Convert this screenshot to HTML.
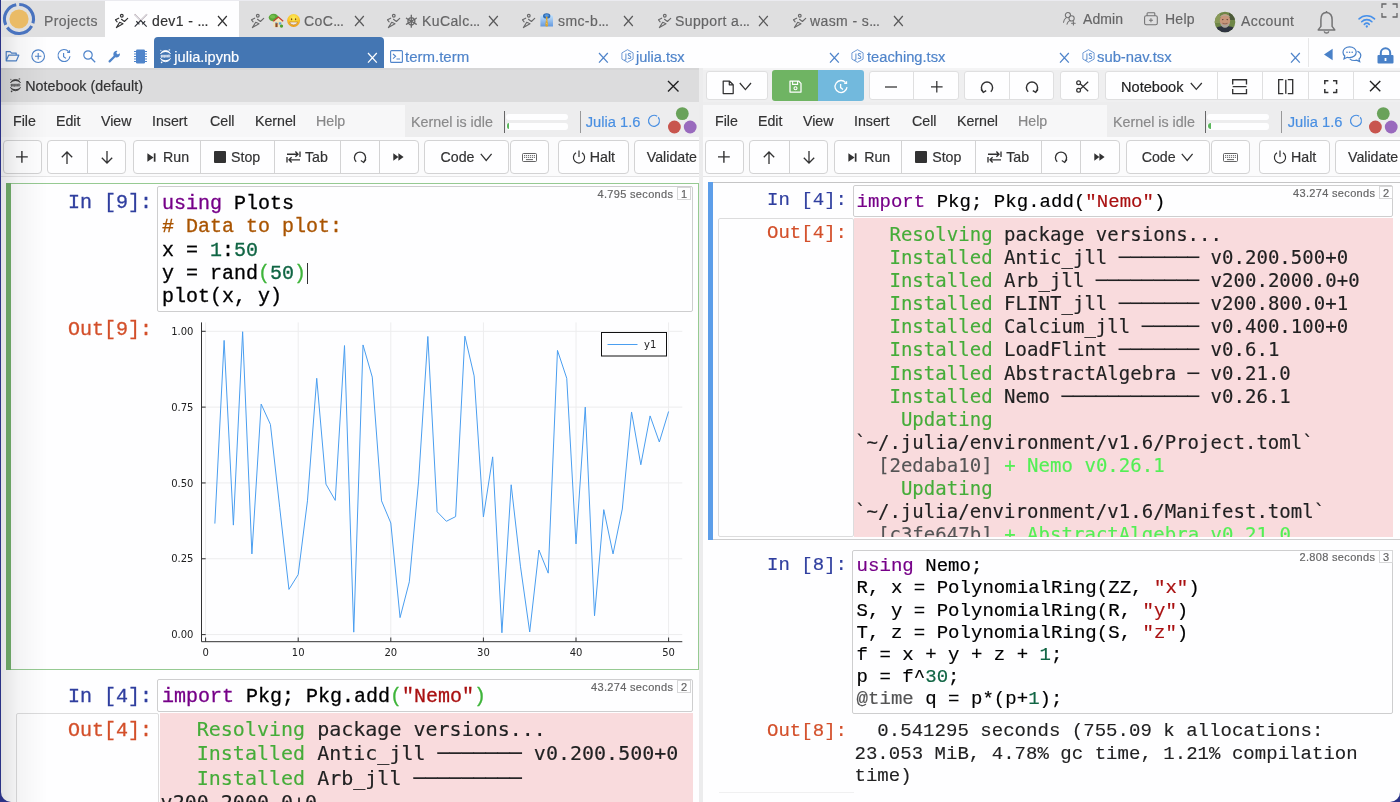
<!DOCTYPE html><html><head><meta charset="utf-8"><title>dev1 - CoCalc</title><style>
*{box-sizing:border-box}
html,body{margin:0;padding:0}html{background:#fff}
body{width:1400px;height:802px;overflow:hidden;background:#2b3286;font-family:"Liberation Sans",sans-serif;color:#333;position:relative}
#win{position:absolute;left:1px;top:0;width:1399px;height:802px;background:#fff;border-radius:0 0 10px 10px;overflow:hidden;will-change:transform;opacity:.9999}
#win>*{position:absolute}
.a{position:absolute}
.t{position:absolute;white-space:pre;line-height:20px;height:20px;-webkit-text-stroke:.18px currentColor}
.btn{position:absolute;background:#fff;border:1px solid #d9d9d9;border-radius:4px}
.dv{position:absolute;width:1px;background:#d9d9d9}
.code{position:absolute;white-space:pre;font-family:"Liberation Mono",monospace;color:#000;-webkit-text-stroke:.3px currentColor}
.out{position:absolute;white-space:pre;font-family:"DejaVu Sans Mono",monospace;color:#222;-webkit-text-stroke:.15px currentColor}
.ibox{position:absolute;border:1px solid #cfcfcf;background:#f7f7f7;border-radius:2px}
.kw{color:#770088}.cm{color:#aa5500}.nu{color:#116644}.st{color:#aa1111}.mb{color:#3fb53a}.me{color:#555}
.g{color:#46ad39}.lg{color:#55f055}.gr{color:#555}
svg{position:absolute;overflow:visible}
</style></head><body><div id="win">
<div class="a" style="left:0px;top:0px;width:1399px;height:37px;background:#e0e0e0;"></div>
<div class="a" style="left:0px;top:0px;width:1399px;height:1px;background:#ececf0;"></div>
<div class="a" style="left:104px;top:1px;width:134px;height:36px;background:#fff;"></div>
<svg style="left:-1px;top:0px;" width="38" height="38" viewBox="0 0 38 38"><circle cx="19" cy="19" r="9.6" fill="#ebbc66"/><path d="M19.25 4.50A14.5 14.5 0 0 1 32.87 23.24 M31.68 26.03A14.5 14.5 0 0 1 7.27 27.52 M5.75 24.90A14.5 14.5 0 0 1 16.23 4.77" stroke="#4a74bf" stroke-width="3.1" fill="none"/></svg>
<span class="t" style="left:43px;top:10.7px;font-size:14px;color:#6a6a6a;letter-spacing:0.42px;">Projects</span>
<svg style="left:112px;top:13px;" width="16" height="16" viewBox="0 0 16 16"><circle cx="8.8" cy="2.7" r="1.35" fill="none" stroke="#333" stroke-width="1.15"/><path d="M5.7 5.2L2.5 6.8L4.1 8.8M8.5 6.3L11.4 8.5L14.7 5.3M3.4 14.6L6.7 9.3L10 10.8Z" fill="none" stroke="#333" stroke-width="1.12" stroke-linejoin="round" stroke-linecap="round"/></svg>
<svg style="left:133px;top:13px;" width="14" height="15" viewBox="0 0 14 15"><path d="M.5 1.3L6.7 7.5M13 1.3L6.7 7.5" stroke="#b39da1" stroke-width="1.5" fill="none"/><path d="M.5 1.3L6.7 7.5M13 1.3L6.7 7.5" stroke="#e6f3fb" stroke-width=".9" fill="none"/><path d="M6.7 7.5L12.7 13.6M6.7 7.5L.7 13.6" stroke="#33363c" stroke-width="1.1" fill="none"/><path d="M2.3 8.2L5.4 11.4M11.1 8.2L8.3 11.4" stroke="#33363c" stroke-width="1.25" fill="none"/></svg>
<span class="t" style="left:151px;top:10.7px;font-size:14px;color:#333;letter-spacing:0.4px;">dev1 - <span style="letter-spacing:-0.5px">...</span></span>
<svg style="left:216.9px;top:16.3px;" width="8.8" height="10" viewBox="0 0 8.8 10"><path d="M0 0L8.8 10M8.8 0L0 10" stroke="#333" stroke-width="1.2" fill="none"/></svg>
<svg style="left:248px;top:13px;" width="16" height="16" viewBox="0 0 16 16"><circle cx="8.8" cy="2.7" r="1.35" fill="none" stroke="#6a6a6a" stroke-width="1.15"/><path d="M5.7 5.2L2.5 6.8L4.1 8.8M8.5 6.3L11.4 8.5L14.7 5.3M3.4 14.6L6.7 9.3L10 10.8Z" fill="none" stroke="#6a6a6a" stroke-width="1.12" stroke-linejoin="round" stroke-linecap="round"/></svg>
<svg style="left:267px;top:13px;" width="16" height="15" viewBox="0 0 16 15"><ellipse cx="5.6" cy="4.6" rx="4.9" ry="3.8" fill="#5aa83a"/><ellipse cx="4.6" cy="3.8" rx="2.6" ry="1.8" fill="#76bf4d"/><rect x="5.3" y="7.6" width="9" height="6.5" fill="#f3e3b5"/><path d="M10.3 4.6L14.3 7.9H6.3Z" fill="#f6e8c0"/><path d="M5.3 8.2L10.35 4L15.2 8.2" fill="none" stroke="#c2412d" stroke-width="1.3" stroke-linejoin="miter"/><rect x="7.4" y="9.9" width="2.2" height="4.2" fill="#8c4a2a"/><rect x="7.3" y="9.3" width="1.6" height="1" fill="#6fb1e8"/><rect x="10.8" y="9.3" width="2.5" height="2.3" fill="#5ea9e6"/><circle cx="13.5" cy="13.1" r="1.65" fill="#4f9f33"/></svg>
<svg style="left:286px;top:13.9px;" width="13.2" height="13" viewBox="0 0 13.2 13"><defs><radialGradient id="sm287" cx=".5" cy=".3" r=".75"><stop offset="0" stop-color="#fdee5a"/><stop offset=".55" stop-color="#f9c82d"/><stop offset="1" stop-color="#e98f12"/></radialGradient></defs><circle cx="6.6" cy="6.5" r="6.45" fill="url(#sm287)"/><ellipse cx="4.6" cy="5.2" rx=".65" ry="1.05" fill="#7a4a10"/><ellipse cx="8.6" cy="5.2" rx=".65" ry="1.05" fill="#7a4a10"/><path d="M2.6 8H10.6Q10.2 10.9 6.6 10.9Q3 10.9 2.6 8Z" fill="#f4ece4" stroke="#a8640e" stroke-width=".5"/></svg>
<span class="t" style="left:303px;top:10.7px;font-size:14px;color:#666;letter-spacing:0.4px;">CoC<span style="letter-spacing:-0.5px">...</span></span>
<svg style="left:353.9px;top:16.3px;" width="8.8" height="10" viewBox="0 0 8.8 10"><path d="M0 0L8.8 10M8.8 0L0 10" stroke="#5a5a5a" stroke-width="1.2" fill="none"/></svg>
<svg style="left:384px;top:13px;" width="16" height="16" viewBox="0 0 16 16"><circle cx="8.8" cy="2.7" r="1.35" fill="none" stroke="#6a6a6a" stroke-width="1.15"/><path d="M5.7 5.2L2.5 6.8L4.1 8.8M8.5 6.3L11.4 8.5L14.7 5.3M3.4 14.6L6.7 9.3L10 10.8Z" fill="none" stroke="#6a6a6a" stroke-width="1.12" stroke-linejoin="round" stroke-linecap="round"/></svg>
<span class="t" style="left:403.7px;top:10.5px;font-size:22px;color:#666;font-family:&quot;DejaVu Sans Mono&quot;,monospace;">⎈</span>
<span class="t" style="left:421px;top:10.7px;font-size:14px;color:#666;letter-spacing:0.4px;">KuCalc<span style="letter-spacing:-0.5px">...</span></span>
<svg style="left:487.9px;top:16.3px;" width="8.8" height="10" viewBox="0 0 8.8 10"><path d="M0 0L8.8 10M8.8 0L0 10" stroke="#5a5a5a" stroke-width="1.2" fill="none"/></svg>
<svg style="left:519px;top:13px;" width="16" height="16" viewBox="0 0 16 16"><circle cx="8.8" cy="2.7" r="1.35" fill="none" stroke="#6a6a6a" stroke-width="1.15"/><path d="M5.7 5.2L2.5 6.8L4.1 8.8M8.5 6.3L11.4 8.5L14.7 5.3M3.4 14.6L6.7 9.3L10 10.8Z" fill="none" stroke="#6a6a6a" stroke-width="1.12" stroke-linejoin="round" stroke-linecap="round"/></svg>
<svg style="left:539px;top:13px;" width="14" height="14" viewBox="0 0 14 14"><defs><linearGradient id="tg" x1="0" y1="0" x2="0" y2="1"><stop offset="0" stop-color="#c4e3fc"/><stop offset="1" stop-color="#6499de"/></linearGradient></defs><path d="M.4 3.4Q.4 2.3 1.6 2.3H11.8Q13 2.3 13 3.4V13.6H.4Z" fill="url(#tg)"/><ellipse cx="6.7" cy="2.9" rx="3.7" ry="2.6" fill="#2e6cb3"/><ellipse cx="6.7" cy="2.6" rx="2.2" ry="1.3" fill="#5a9be0"/><path d="M6.7 3.2L7.7 4.6L7.3 6L8.1 12L7.6 13.6H5.8L5.3 12L6.1 6L5.7 4.6Z" fill="#dba52f"/><path d="M6.2 7.5L7.4 8.6M6 10L7.6 11.2" stroke="#f3d98a" stroke-width=".6"/></svg>
<span class="t" style="left:557px;top:10.7px;font-size:14px;color:#666;letter-spacing:0.4px;">smc-b<span style="letter-spacing:-0.5px">...</span></span>
<svg style="left:622.9px;top:16.3px;" width="8.8" height="10" viewBox="0 0 8.8 10"><path d="M0 0L8.8 10M8.8 0L0 10" stroke="#5a5a5a" stroke-width="1.2" fill="none"/></svg>
<svg style="left:655px;top:13px;" width="16" height="16" viewBox="0 0 16 16"><circle cx="8.8" cy="2.7" r="1.35" fill="none" stroke="#6a6a6a" stroke-width="1.15"/><path d="M5.7 5.2L2.5 6.8L4.1 8.8M8.5 6.3L11.4 8.5L14.7 5.3M3.4 14.6L6.7 9.3L10 10.8Z" fill="none" stroke="#6a6a6a" stroke-width="1.12" stroke-linejoin="round" stroke-linecap="round"/></svg>
<span class="t" style="left:674px;top:10.7px;font-size:14px;color:#666;letter-spacing:0.4px;">Support a<span style="letter-spacing:-0.5px">...</span></span>
<svg style="left:757.9px;top:16.3px;" width="8.8" height="10" viewBox="0 0 8.8 10"><path d="M0 0L8.8 10M8.8 0L0 10" stroke="#5a5a5a" stroke-width="1.2" fill="none"/></svg>
<svg style="left:790px;top:13px;" width="16" height="16" viewBox="0 0 16 16"><circle cx="8.8" cy="2.7" r="1.35" fill="none" stroke="#6a6a6a" stroke-width="1.15"/><path d="M5.7 5.2L2.5 6.8L4.1 8.8M8.5 6.3L11.4 8.5L14.7 5.3M3.4 14.6L6.7 9.3L10 10.8Z" fill="none" stroke="#6a6a6a" stroke-width="1.12" stroke-linejoin="round" stroke-linecap="round"/></svg>
<span class="t" style="left:809px;top:10.7px;font-size:14px;color:#666;letter-spacing:0.4px;">wasm - s<span style="letter-spacing:-0.5px">...</span></span>
<svg style="left:892.9px;top:16.3px;" width="8.8" height="10" viewBox="0 0 8.8 10"><path d="M0 0L8.8 10M8.8 0L0 10" stroke="#5a5a5a" stroke-width="1.2" fill="none"/></svg>
<svg style="left:1061px;top:10.5px;" width="14" height="15" viewBox="0 0 14 15"><circle cx="5.9" cy="4.1" r="2.6" fill="none" stroke="#727272" stroke-width="1.05"/><circle cx="9.6" cy="7.4" r="2.6" fill="#e0e0e0" stroke="#727272" stroke-width="1.05"/><path d="M1.5 11.3Q2 8.2 4 6.9M5 13.2Q5.6 10.6 7.7 9.6M11.4 10.4V14M9.6 12.2H13.2" fill="none" stroke="#727272" stroke-width="1.05" stroke-linecap="round"/></svg>
<span class="t" style="left:1082px;top:8.7px;font-size:14px;color:#666;letter-spacing:0.1px;">Admin</span>
<svg style="left:1142.5px;top:11.5px;" width="14" height="14" viewBox="0 0 14 14"><rect x=".6" y="3.7" width="12.7" height="9.1" rx="1.6" fill="none" stroke="#727272" stroke-width="1.05"/><path d="M3.1 3.7V1.6Q3.1 .8 3.9 .8H10Q10.8 .8 10.8 1.6V3.7M6.95 6.3V10.3M4.95 8.3H8.95" fill="none" stroke="#727272" stroke-width="1.05"/></svg>
<span class="t" style="left:1164px;top:8.7px;font-size:14px;color:#666;letter-spacing:0.25px;">Help</span>
<svg style="left:1213px;top:10.6px;" width="22" height="22" viewBox="0 0 22 22"><defs><clipPath id="av"><circle cx="11" cy="11" r="10.3"/></clipPath></defs><g clip-path="url(#av)"><rect width="22" height="22" fill="#6f8747"/><rect x="0" y="0" width="6" height="12" fill="#8a9a58"/><rect x="15" y="0" width="7" height="9" fill="#4d5b3a"/><path d="M0 22V17.5Q5 14.5 11 15Q17 14.5 22 17.5V22Z" fill="#2f3440"/><ellipse cx="11" cy="9.6" rx="5.2" ry="6.6" fill="#c8967a"/><path d="M5.8 6.5C6 2.4 16 2.4 16.2 6.5C14 4.6 8 4.6 5.8 6.5Z" fill="#b8a690"/><path d="M6.2 11.5Q7 16.6 11 16.8Q15 16.6 15.8 11.5Q14 14 11 14Q8 14 6.2 11.5Z" fill="#a9a29a"/><path d="M8.6 12.3Q11 14 13.4 12.3Q11 13 8.6 12.3Z" fill="#f3ece6" stroke="#7a4a3c" stroke-width=".5"/><circle cx="8.8" cy="8.6" r=".7" fill="#4a3528"/><circle cx="13.2" cy="8.6" r=".7" fill="#4a3528"/></g></svg>
<span class="t" style="left:1240px;top:10.9px;font-size:14px;color:#666;letter-spacing:0.4px;">Account</span>
<svg style="left:1315px;top:9.8px;" width="21" height="26" viewBox="0 0 21 26"><path d="M10.5 2.6C6.4 2.6 4.9 6 4.9 9.8V16.4L2.2 19.9H18.8L16.1 16.4V9.8C16.1 6 14.6 2.6 10.5 2.6ZM10.5 2.6V1" fill="none" stroke="#747474" stroke-width="1.5" stroke-linejoin="round"/><path d="M8.2 21.4A2.4 2.4 0 0 0 12.8 21.4" fill="none" stroke="#747474" stroke-width="1.5"/></svg>
<svg style="left:1356.7px;top:14.4px;" width="17.6" height="14.1" viewBox="0 0 20 16"><path d="M1.2 5.6A12.5 12.5 0 0 1 18.8 5.6M4.2 8.8A8.2 8.2 0 0 1 15.8 8.8M7.2 11.8A4 4 0 0 1 12.8 11.8" fill="none" stroke="#4791ea" stroke-width="1.8" stroke-linecap="round"/><circle cx="10" cy="14.2" r="1.3" fill="#4791ea"/></svg>
<svg style="left:1380px;top:3px;" width="17" height="15" viewBox="0 0 17 15"><path d="M1 5V1H5.5M11.5 1H16V5M16 10V14H11.5M5.5 14H1V10" fill="none" stroke="#666" stroke-width="1.3"/></svg>
<div class="a" style="left:0px;top:37px;width:1399px;height:30.8px;background:#fff;"></div>
<div class="a" style="left:0px;top:67.7px;width:1399px;height:1.2px;background:#d4d4d4;"></div>
<svg style="left:4px;top:50px;" width="15" height="13" viewBox="0 0 15 13"><path d="M1.2 10.8V1.6H5.2L6.6 3.2H11.2V5.2M1.2 10.8L3.6 5.2H13.8L11.4 10.8Z" fill="none" stroke="#5085ca" stroke-width="1.2" stroke-linejoin="round"/></svg>
<svg style="left:30px;top:49px;" width="15" height="15" viewBox="0 0 15 15"><circle cx="7.2" cy="7.2" r="6.3" fill="none" stroke="#5085ca" stroke-width="1.1"/><path d="M7.2 4V10.4M4 7.2H10.4" stroke="#5085ca" stroke-width="1.1"/></svg>
<svg style="left:56px;top:49px;" width="15" height="15" viewBox="0 0 15 15"><path d="M11.6 2.6A6 6 0 1 0 13 7.2" fill="none" stroke="#5085ca" stroke-width="1.15"/><path d="M10.2 3.3H12.5V1.2" fill="none" stroke="#5085ca" stroke-width="1.15"/><path d="M6.6 4V7.6L9 9.4" fill="none" stroke="#5085ca" stroke-width="1.15"/></svg>
<svg style="left:82px;top:50px;" width="13" height="13" viewBox="0 0 13 13"><circle cx="5" cy="5" r="4.2" fill="none" stroke="#5085ca" stroke-width="1.2"/><path d="M8 8L12.2 12.2" stroke="#5085ca" stroke-width="1.3"/></svg>
<svg style="left:107px;top:50px;" width="13" height="13" viewBox="0 0 13 13"><path d="M1.6 11.4L7 6" stroke="#5085ca" stroke-width="2.2" stroke-linecap="round"/><path d="M11.8 3.2A3.3 3.3 0 1 1 9.4 0.9L8.2 3L9.8 4.6Z" fill="#5085ca"/></svg>
<svg style="left:132px;top:49px;" width="15" height="15" viewBox="0 0 15 15"><rect x="3" y="0.5" width="9" height="14" rx="1.3" fill="#5085ca"/><path d="M1 2.5H14M1 5H14M1 7.5H14M1 10H14M1 12.5H14" stroke="#5085ca" stroke-width="1"/></svg>
<div class="a" style="left:153px;top:37px;width:230px;height:31.4px;background:#4577b3;border-radius:4px 4px 0 0;"></div>
<svg style="left:158px;top:48.9px;" width="13" height="14" viewBox="0 0 13 14"><g transform="translate(6.5 7)" fill="#fff"><path d="M-5.1 -2.1A5.5 5.5 0 0 1 5.1 -2.1A8.6 8.6 0 0 0 -5.1 -2.1Z"/><path d="M-5.1 2.3A5.5 5.5 0 0 0 5.1 2.3A8.6 8.6 0 0 1 -5.1 2.3Z"/><path d="M-5.1 -2.1A5.5 5.5 0 0 1 5.1 -2.1M-5.1 2.3A5.5 5.5 0 0 0 5.1 2.3" fill="none" stroke="#fff" stroke-width=".9"/><rect x="-4.9" y="-1.25" width="9.8" height="2.7" rx=".8" opacity=".55"/><path d="M-4 -0.9V1.9M-2.6 -.9V1.2M-1.2 -.9V1.9M.4 -.9V1.2M1.9 -.9V1.2M3.4 -1.6V1.2" fill="none" stroke="#fff" stroke-width=".7" opacity=".75"/><circle cx="-4.7" cy="-5.5" r=".75" opacity=".6"/><circle cx="3.9" cy="-6.1" r=".9" opacity=".65"/><circle cx="-3.9" cy="6.3" r=".85"/></g></svg>
<span class="t" style="left:173.3px;top:47.3px;font-size:14.6px;color:#fff;">julia.ipynb</span>
<svg style="left:366.9px;top:53.2px;" width="8.8" height="9.6" viewBox="0 0 8.8 9.6"><path d="M0 0L8.8 9.6M8.8 0L0 9.6" stroke="#fff" stroke-width="1.25" fill="none"/></svg>
<svg style="left:389px;top:50px;" width="13" height="13" viewBox="0 0 13 13"><rect x=".6" y=".6" width="11.8" height="11.8" rx="1" fill="none" stroke="#5085ca" stroke-width="1.1"/><path d="M3 4L5.6 6.3L3 8.6M6.5 9H10" fill="none" stroke="#5085ca" stroke-width="1.1"/></svg>
<span class="t" style="left:404px;top:47.3px;font-size:15px;color:#5085ca;">term.term</span>
<svg style="left:597.9px;top:53.2px;" width="8.8" height="9.6" viewBox="0 0 8.8 9.6"><path d="M0 0L8.8 9.6M8.8 0L0 9.6" stroke="#5085ca" stroke-width="1.25" fill="none"/></svg>
<svg style="left:619.6px;top:48.9px;" width="13" height="14" viewBox="0 0 13 14"><path d="M6.5 .7L12.1 3.9V10.1L6.5 13.3L.9 10.1V3.9Z" fill="none" stroke="#5085ca" stroke-width="1" opacity=".8"/><path d="M4.9 4.4V10Q4.9 11.6 3.2 10.9M9.9 5.2Q8.9 4.1 7.5 4.8Q6.6 6 8.3 6.8Q10.6 7.8 9.4 9.2Q8 10 6.8 8.9" fill="none" stroke="#5085ca" stroke-width="1.05" opacity=".9"/></svg>
<span class="t" style="left:635px;top:47.3px;font-size:14.6px;color:#5085ca;">julia.tsx</span>
<svg style="left:828.9px;top:53.2px;" width="8.8" height="9.6" viewBox="0 0 8.8 9.6"><path d="M0 0L8.8 9.6M8.8 0L0 9.6" stroke="#5085ca" stroke-width="1.25" fill="none"/></svg>
<svg style="left:849.6px;top:48.9px;" width="13" height="14" viewBox="0 0 13 14"><path d="M6.5 .7L12.1 3.9V10.1L6.5 13.3L.9 10.1V3.9Z" fill="none" stroke="#5085ca" stroke-width="1" opacity=".8"/><path d="M4.9 4.4V10Q4.9 11.6 3.2 10.9M9.9 5.2Q8.9 4.1 7.5 4.8Q6.6 6 8.3 6.8Q10.6 7.8 9.4 9.2Q8 10 6.8 8.9" fill="none" stroke="#5085ca" stroke-width="1.05" opacity=".9"/></svg>
<span class="t" style="left:866px;top:47.3px;font-size:14.7px;color:#5085ca;">teaching.tsx</span>
<svg style="left:1058.9px;top:53.2px;" width="8.8" height="9.6" viewBox="0 0 8.8 9.6"><path d="M0 0L8.8 9.6M8.8 0L0 9.6" stroke="#5085ca" stroke-width="1.25" fill="none"/></svg>
<svg style="left:1080.6px;top:48.9px;" width="13" height="14" viewBox="0 0 13 14"><path d="M6.5 .7L12.1 3.9V10.1L6.5 13.3L.9 10.1V3.9Z" fill="none" stroke="#5085ca" stroke-width="1" opacity=".8"/><path d="M4.9 4.4V10Q4.9 11.6 3.2 10.9M9.9 5.2Q8.9 4.1 7.5 4.8Q6.6 6 8.3 6.8Q10.6 7.8 9.4 9.2Q8 10 6.8 8.9" fill="none" stroke="#5085ca" stroke-width="1.05" opacity=".9"/></svg>
<span class="t" style="left:1096px;top:47.3px;font-size:14.8px;color:#5085ca;">sub-nav.tsx</span>
<svg style="left:1289.9px;top:53.2px;" width="8.8" height="9.6" viewBox="0 0 8.8 9.6"><path d="M0 0L8.8 9.6M8.8 0L0 9.6" stroke="#5085ca" stroke-width="1.25" fill="none"/></svg>
<div class="a" style="left:1307px;top:38px;width:1px;height:29.3px;background:#e8e8e8;"></div>
<svg style="left:1321.5px;top:48.2px;" width="11" height="13" viewBox="0 0 11 13"><path d="M9.6 .8V12.2L1 6.5Z" fill="#4a82c8"/></svg>
<svg style="left:1341px;top:46.3px;" width="20" height="17" viewBox="0 0 20 17"><path d="M7.6 .8C11.3 .8 14.2 3.2 14.2 6.2C14.2 9.2 11.3 11.6 7.6 11.6C6.8 11.6 6 11.5 5.3 11.3L2 12.8L2.8 10C1.7 9 1 7.7 1 6.2C1 3.2 3.9 .8 7.6 .8Z" fill="none" stroke="#4a82c8" stroke-width="1.2"/><path d="M15.4 5.2C17.4 6 18.8 7.6 18.8 9.4C18.8 10.8 18.1 12 17 12.9L17.7 15.6L14.7 14.2C14 14.4 13.3 14.5 12.5 14.5C10.6 14.5 8.9 13.9 7.8 12.8" fill="none" stroke="#4a82c8" stroke-width="1.2"/><circle cx="5" cy="6.2" r=".8" fill="#4a82c8"/><circle cx="7.6" cy="6.2" r=".8" fill="#4a82c8"/><circle cx="10.2" cy="6.2" r=".8" fill="#4a82c8"/></svg>
<svg style="left:1376px;top:48px;" width="17" height="16" viewBox="0 0 17 16"><rect x=".5" y="7" width="16" height="8.6" rx="1" fill="#4a82c8"/><path d="M3.8 7V5A4.7 4.7 0 0 1 13.2 5V7" fill="none" stroke="#4a82c8" stroke-width="2"/><rect x="7.6" y="10" width="1.8" height="3" fill="#fff"/></svg>
<div class="a" style="left:0px;top:68.4px;width:698px;height:34.1px;background:#dddddd;"></div>
<div class="a" style="left:0px;top:68.4px;width:698px;height:1.8px;background:#d7d7d7;"></div>
<svg style="left:7.5px;top:78px;" width="13" height="14" viewBox="0 0 13 14"><g transform="translate(6.5 7)" fill="#444"><path d="M-5.1 -2.1A5.5 5.5 0 0 1 5.1 -2.1A8.6 8.6 0 0 0 -5.1 -2.1Z"/><path d="M-5.1 2.3A5.5 5.5 0 0 0 5.1 2.3A8.6 8.6 0 0 1 -5.1 2.3Z"/><path d="M-5.1 -2.1A5.5 5.5 0 0 1 5.1 -2.1M-5.1 2.3A5.5 5.5 0 0 0 5.1 2.3" fill="none" stroke="#444" stroke-width=".9"/><rect x="-4.9" y="-1.25" width="9.8" height="2.7" rx=".8" opacity=".55"/><path d="M-4 -0.9V1.9M-2.6 -.9V1.2M-1.2 -.9V1.9M.4 -.9V1.2M1.9 -.9V1.2M3.4 -1.6V1.2" fill="none" stroke="#444" stroke-width=".7" opacity=".75"/><circle cx="-4.7" cy="-5.5" r=".75" opacity=".6"/><circle cx="3.9" cy="-6.1" r=".9" opacity=".65"/><circle cx="-3.9" cy="6.3" r=".85"/></g></svg>
<span class="t" style="left:24.3px;top:75.5px;font-size:14.3px;color:#333;">Notebook (default)</span>
<svg style="left:667.25px;top:80.75px;" width="10.5" height="10.5" viewBox="0 0 10.5 10.5"><path d="M0 0L10.5 10.5M10.5 0L0 10.5" stroke="#222" stroke-width="1.4" fill="none"/></svg>
<div class="a" style="left:0px;top:102.3px;width:698px;height:35px;background:#eeeeee;"></div>
<div class="a" style="left:0px;top:105px;width:404px;height:32.2px;background:#f8f8f8;"></div>
<div class="a" style="left:0px;top:137.2px;width:698px;height:39px;background:#fcfcfc;"></div>
<div class="a" style="left:0px;top:176px;width:698px;height:1px;background:#e6e6e6;"></div>
<span class="t" style="left:12px;top:111px;font-size:14.2px;color:#333;">File</span>
<span class="t" style="left:55px;top:111px;font-size:14.2px;color:#333;">Edit</span>
<span class="t" style="left:100px;top:111px;font-size:14.2px;color:#333;">View</span>
<span class="t" style="left:151px;top:111px;font-size:14.2px;color:#333;">Insert</span>
<span class="t" style="left:209px;top:111px;font-size:14.2px;color:#333;">Cell</span>
<span class="t" style="left:254px;top:111px;font-size:14.2px;color:#333;">Kernel</span>
<span class="t" style="left:315px;top:111px;font-size:14.2px;color:#888;">Help</span>
<span class="t" style="left:410px;top:111.7px;font-size:14.3px;color:#8a8a8a;">Kernel is idle</span>
<div class="a" style="left:502.5px;top:111px;width:1.5px;height:21.5px;background:#666;"></div>
<div class="a" style="left:505px;top:113.5px;width:61.5px;height:6.5px;background:#fff;border-radius:3px;"></div>
<div class="a" style="left:505px;top:123px;width:61.5px;height:6.5px;background:#fff;border-radius:3px;"></div>
<div class="a" style="left:505.6px;top:123.3px;width:2.8px;height:5.6px;background:#5cb85c;border-radius:3px 0 0 3px;"></div>
<div class="a" style="left:578.7px;top:111px;width:1.2px;height:21.5px;background:#999;"></div>
<span class="t" style="left:584.7px;top:111.6px;font-size:14.7px;color:#4a90e2;">Julia 1.6</span>
<svg style="left:645.5px;top:114px;" width="14" height="14" viewBox="0 0 14 14"><path d="M11.21 3.26A5.5 5.5 0 1 1 10.15 2.29" fill="none" stroke="#4a90e2" stroke-width="1.2"/></svg>
<svg style="left:664.8px;top:105.7px;" width="33" height="30" viewBox="0 0 33 30"><circle cx="16.3" cy="7.6" r="6.4" fill="#6aa35a"/><circle cx="8.4" cy="21" r="6.4" fill="#c9564e"/><circle cx="24.2" cy="21" r="6.4" fill="#9a6bbd"/></svg>
<div class="btn" style="left:1.5px;top:140.3px;width:39.2px;height:33.3px;background:#fff;border-color:#d4d4d4;"></div>
<div class="btn" style="left:46.3px;top:140.3px;width:78.95px;height:33.3px;background:#fff;border-color:#d4d4d4;"></div>
<div class="a" style="left:85.5px;top:140.8px;width:1px;height:32.3px;background:#d4d4d4;"></div>
<div class="btn" style="left:131.5px;top:140.3px;width:286.5px;height:33.3px;background:#fff;border-color:#d4d4d4;"></div>
<div class="a" style="left:198.5px;top:140.8px;width:1px;height:32.3px;background:#d4d4d4;"></div>
<div class="a" style="left:272.75px;top:140.8px;width:1px;height:32.3px;background:#d4d4d4;"></div>
<div class="a" style="left:339px;top:140.8px;width:1px;height:32.3px;background:#d4d4d4;"></div>
<div class="a" style="left:377.9px;top:140.8px;width:1px;height:32.3px;background:#d4d4d4;"></div>
<div class="btn" style="left:423.3px;top:140.3px;width:84.7px;height:33.3px;background:#fff;border-color:#d4d4d4;"></div>
<div class="btn" style="left:508.7px;top:140.3px;width:39.1px;height:33.3px;background:#fff;border-color:#d4d4d4;"></div>
<div class="btn" style="left:557px;top:140.3px;width:70.6px;height:33.3px;background:#fff;border-color:#d4d4d4;"></div>
<div class="btn" style="left:633px;top:140.3px;width:86px;height:33.3px;background:#fff;border-color:#d4d4d4;"></div>
<svg style="left:15.2px;top:151.2px;" width="11.8" height="11.8" viewBox="0 0 11.8 11.8"><path d="M0 5.9H11.8M5.9 0V11.8" stroke="#333" stroke-width="1.4"/></svg>
<svg style="left:60px;top:150.5px;" width="12" height="13" viewBox="0 0 12 13"><path d="M6 13V1M.8 6.2L6 1L11.2 6.2" fill="none" stroke="#333" stroke-width="1.3"/></svg>
<svg style="left:99.5px;top:150.5px;" width="12" height="13" viewBox="0 0 12 13"><path d="M6 0V12M.8 6.8L6 12L11.2 6.8" fill="none" stroke="#333" stroke-width="1.3"/></svg>
<svg style="left:146px;top:152.5px;" width="9" height="9" viewBox="0 0 9 9"><path d="M.4 .3L6.6 4.5L.4 8.7Z" fill="#333"/><rect x="6.8" y=".3" width="1.7" height="8.4" fill="#333"/></svg>
<span class="t" style="left:162px;top:147.3px;font-size:14.2px;color:#333;">Run</span>
<div class="a" style="left:213px;top:151px;width:12.3px;height:12.3px;background:#333;border-radius:1px;"></div>
<span class="t" style="left:230px;top:147.3px;font-size:14.2px;color:#333;">Stop</span>
<svg style="left:285px;top:150px;" width="15" height="14" viewBox="0 0 15 14"><path d="M1 4.2H12M9.4 1.6L12 4.2L9.4 6.8M14 1.4V7M14 9.8H3M5.6 7.2L3 9.8L5.6 12.4M1 7V12.6" fill="none" stroke="#333" stroke-width="1.35"/></svg>
<span class="t" style="left:304px;top:147.3px;font-size:14.2px;color:#333;">Tab</span>
<svg style="left:351.5px;top:150px;" width="14" height="14" viewBox="0 0 14 14"><g transform="translate(14,0) scale(-1,1)"><path d="M3.2 11.8A5.6 5.6 0 1 1 10.8 11.8" fill="none" stroke="#333" stroke-width="1.35"/><path d="M1 9.4L3.3 12.4L6.2 10.6" fill="none" stroke="#333" stroke-width="1.2"/></g></svg>
<svg style="left:392px;top:153px;" width="11" height="8" viewBox="0 0 11 8"><path d="M.3 .2L5.4 4L.3 7.8ZM5.4 .2L10.6 4L5.4 7.8Z" fill="#333"/></svg>
<span class="t" style="left:439.5px;top:147.3px;font-size:14.2px;color:#333;">Code</span>
<svg style="left:478.8px;top:152.7px;" width="13" height="9" viewBox="0 0 13 9"><path d="M.8 .8L6.2 7.4L11.6 .8" fill="none" stroke="#333" stroke-width="1.25"/></svg>
<svg style="left:520.5px;top:152.5px;" width="15" height="9" viewBox="0 0 15 9"><rect x=".5" y=".5" width="14" height="8" rx="1" fill="none" stroke="#555" stroke-width=".9"/><path d="M2 2.6H13M2 4.4H13" stroke="#555" stroke-width=".9" stroke-dasharray="1.2 .8"/><path d="M4 6.6H11" stroke="#555" stroke-width=".9"/></svg>
<svg style="left:570.5px;top:150px;" width="14" height="14" viewBox="0 0 14 14"><path d="M4 2.8A5.6 5.6 0 1 0 10 2.8M7 .4V7" fill="none" stroke="#333" stroke-width="1.2"/></svg>
<span class="t" style="left:588.8px;top:147.3px;font-size:14.2px;color:#333;">Halt</span>
<span class="t" style="left:645.8px;top:147.3px;font-size:14.2px;color:#333;">Validate</span>
<div class="a" style="left:698.3px;top:68.4px;width:3.7px;height:734px;background:#ededed;"></div>
<div class="a" style="left:702px;top:68.4px;width:697px;height:33.6px;background:#f0f0f0;"></div>
<div class="a" style="left:702px;top:68.4px;width:697px;height:2px;background:#f5f5f5;"></div>
<div class="a" style="left:702px;top:101.7px;width:697px;height:1.1px;background:#d6d6d6;"></div>
<div class="btn" style="left:704.5px;top:70.8px;width:62px;height:29px;background:#fff;border-color:#e0e0e0;border-radius:3px;"></div>
<svg style="left:721.3px;top:79.5px;" width="13" height="15" viewBox="0 0 13 15"><path d="M1.2 1H7.3L11.2 4.8V13.6H1.2Z M7.3 1V4.8H11.2" fill="none" stroke="#333" stroke-width="1.25" stroke-linejoin="round"/></svg>
<svg style="left:738.2px;top:82.4px;" width="13" height="9" viewBox="0 0 13 9"><path d="M.8 1L6.4 7.6L12 1" fill="none" stroke="#333" stroke-width="1.25"/></svg>
<div class="a" style="left:770.5px;top:70.2px;width:46.4px;height:30.4px;background:#70b563;border-radius:3px 0 0 3px;"></div>
<div class="a" style="left:816.9px;top:70.2px;width:46px;height:30.4px;background:#73badd;border-radius:0 3px 3px 0;"></div>
<svg style="left:787.8px;top:79.8px;" width="13" height="13" viewBox="0 0 13 13"><path d="M1 1H9.6L12 3.4V12H1Z" fill="none" stroke="#fff" stroke-width="1.25" stroke-linejoin="round"/><path d="M3.6 1V4.4H8.6V1" fill="none" stroke="#fff" stroke-width="1.1"/><circle cx="6.5" cy="8.2" r="1.5" fill="none" stroke="#fff" stroke-width="1.1"/></svg>
<svg style="left:832.5px;top:80px;" width="15" height="15" viewBox="0 0 15 15"><path d="M11.6 2.6A6 6 0 1 0 13 7.2" fill="none" stroke="#fff" stroke-width="1.3"/><path d="M10.2 3.3H12.5V1.2" fill="none" stroke="#fff" stroke-width="1.3"/><path d="M6.6 4V7.6L9 9.4" fill="none" stroke="#fff" stroke-width="1.3"/></svg>
<div class="btn" style="left:868px;top:70.8px;width:90px;height:29px;background:#fff;border-color:#e0e0e0;border-radius:3px;"></div>
<div class="a" style="left:912px;top:71px;width:1px;height:28.5px;background:#e0e0e0;"></div>
<svg style="left:883.8px;top:85.8px;" width="12" height="2" viewBox="0 0 12 2"><path d="M0 1H12" stroke="#333" stroke-width="1.25"/></svg>
<svg style="left:929.6px;top:80.6px;" width="11.6" height="11.6" viewBox="0 0 11.6 11.6"><path d="M0 5.8H11.6M5.8 0V11.6" stroke="#333" stroke-width="1.25"/></svg>
<div class="btn" style="left:963px;top:70.8px;width:90px;height:29px;background:#fff;border-color:#e0e0e0;border-radius:3px;"></div>
<div class="a" style="left:1008px;top:71px;width:1px;height:28.5px;background:#e0e0e0;"></div>
<svg style="left:978.5px;top:79.8px;" width="14" height="14" viewBox="0 0 14 14"><g><path d="M3.2 11.8A5.6 5.6 0 1 1 10.8 11.8" fill="none" stroke="#333" stroke-width="1.45"/><path d="M1 9.4L3.3 12.4L6.2 10.6" fill="none" stroke="#333" stroke-width="1.3"/></g></svg>
<svg style="left:1024px;top:79.8px;" width="14" height="14" viewBox="0 0 14 14"><g transform="translate(14,0) scale(-1,1)"><path d="M3.2 11.8A5.6 5.6 0 1 1 10.8 11.8" fill="none" stroke="#333" stroke-width="1.45"/><path d="M1 9.4L3.3 12.4L6.2 10.6" fill="none" stroke="#333" stroke-width="1.3"/></g></svg>
<div class="btn" style="left:1058.5px;top:70.8px;width:39.5px;height:29px;background:#fff;border-color:#e0e0e0;border-radius:3px;"></div>
<svg style="left:1074.5px;top:79.8px;" width="13" height="13" viewBox="0 0 13 13"><circle cx="2.6" cy="2.8" r="1.9" fill="none" stroke="#333" stroke-width="1.25"/><circle cx="2.6" cy="10.2" r="1.9" fill="none" stroke="#333" stroke-width="1.25"/><path d="M4.2 3.8L12.2 11.2M4.2 9.2L12.2 1.8" stroke="#333" stroke-width="1.25" fill="none"/></svg>
<div class="btn" style="left:1103.5px;top:70.8px;width:297.5px;height:29px;background:#fff;border-color:#e0e0e0;border-radius:3px 0 0 3px;"></div>
<div class="a" style="left:1216px;top:71px;width:1px;height:28.5px;background:#e0e0e0;"></div>
<div class="a" style="left:1261px;top:71px;width:1px;height:28.5px;background:#e0e0e0;"></div>
<div class="a" style="left:1306.5px;top:71px;width:1px;height:28.5px;background:#e0e0e0;"></div>
<div class="a" style="left:1351.5px;top:71px;width:1px;height:28.5px;background:#e0e0e0;"></div>
<span class="t" style="left:1120px;top:76.8px;font-size:14.6px;color:#222;">Notebook</span>
<svg style="left:1188.5px;top:82.3px;" width="13" height="9" viewBox="0 0 13 9"><path d="M.8 1L6.3 7.4L11.8 1" fill="none" stroke="#333" stroke-width="1.25"/></svg>
<svg style="left:1231.4px;top:78.7px;" width="15.2" height="15.4" viewBox="0 0 15.2 15.4"><path d="M.7 5.6V.7H14.5V5.6M.7 7.7H14.5M.7 9.9V14.7H14.5V9.9" fill="none" stroke="#333" stroke-width="1.35"/></svg>
<svg style="left:1276.6px;top:78.7px;" width="15.4" height="15.4" viewBox="0 0 15.4 15.4"><path d="M5.3 .7H.7V14.7H5.3M7.8 .7V14.7M9.8 .7H14.7V14.7H9.8" fill="none" stroke="#333" stroke-width="1.35"/></svg>
<svg style="left:1323px;top:80.1px;" width="13.4" height="13.2" viewBox="0 0 13.4 13.2"><path d="M.8 4.2V.8H4.4M9 .8H12.6V4.2M12.6 9V12.4H9M4.4 12.4H.8V9" fill="none" stroke="#333" stroke-width="1.5"/></svg>
<svg style="left:1369.35px;top:81.45px;" width="10.3" height="10.3" viewBox="0 0 10.3 10.3"><path d="M0 0L10.3 10.3M10.3 0L0 10.3" stroke="#222" stroke-width="1.4" fill="none"/></svg>
<div class="a" style="left:702px;top:102.3px;width:697px;height:35px;background:#eeeeee;"></div>
<div class="a" style="left:702px;top:105px;width:404px;height:32.2px;background:#f8f8f8;"></div>
<div class="a" style="left:702px;top:137.2px;width:697px;height:39px;background:#fcfcfc;"></div>
<div class="a" style="left:702px;top:176px;width:697px;height:1px;background:#e6e6e6;"></div>
<span class="t" style="left:714px;top:111px;font-size:14.2px;color:#333;">File</span>
<span class="t" style="left:757px;top:111px;font-size:14.2px;color:#333;">Edit</span>
<span class="t" style="left:802px;top:111px;font-size:14.2px;color:#333;">View</span>
<span class="t" style="left:853px;top:111px;font-size:14.2px;color:#333;">Insert</span>
<span class="t" style="left:911px;top:111px;font-size:14.2px;color:#333;">Cell</span>
<span class="t" style="left:956px;top:111px;font-size:14.2px;color:#333;">Kernel</span>
<span class="t" style="left:1017px;top:111px;font-size:14.2px;color:#888;">Help</span>
<span class="t" style="left:1112px;top:111.7px;font-size:14.3px;color:#8a8a8a;">Kernel is idle</span>
<div class="a" style="left:1203.7px;top:111px;width:1.5px;height:21.5px;background:#666;"></div>
<div class="a" style="left:1206.2px;top:113.5px;width:61.5px;height:6.5px;background:#fff;border-radius:3px;"></div>
<div class="a" style="left:1206.2px;top:123px;width:61.5px;height:6.5px;background:#fff;border-radius:3px;"></div>
<div class="a" style="left:1206.8px;top:123.3px;width:2.8px;height:5.6px;background:#5cb85c;border-radius:3px 0 0 3px;"></div>
<div class="a" style="left:1279.9px;top:111px;width:1.2px;height:21.5px;background:#999;"></div>
<span class="t" style="left:1286.7px;top:111.6px;font-size:14.7px;color:#4a90e2;">Julia 1.6</span>
<svg style="left:1347.5px;top:114px;" width="14" height="14" viewBox="0 0 14 14"><path d="M11.21 3.26A5.5 5.5 0 1 1 10.15 2.29" fill="none" stroke="#4a90e2" stroke-width="1.2"/></svg>
<svg style="left:1365.6px;top:105.7px;" width="33" height="30" viewBox="0 0 33 30"><circle cx="16.3" cy="7.6" r="6.4" fill="#6aa35a"/><circle cx="8.4" cy="21" r="6.4" fill="#c9564e"/><circle cx="24.2" cy="21" r="6.4" fill="#9a6bbd"/></svg>
<div class="btn" style="left:703.5px;top:140.3px;width:39.2px;height:33.3px;background:#fff;border-color:#d4d4d4;"></div>
<div class="btn" style="left:748.3px;top:140.3px;width:78.95px;height:33.3px;background:#fff;border-color:#d4d4d4;"></div>
<div class="a" style="left:787.5px;top:140.8px;width:1px;height:32.3px;background:#d4d4d4;"></div>
<div class="btn" style="left:832.7px;top:140.3px;width:286.5px;height:33.3px;background:#fff;border-color:#d4d4d4;"></div>
<div class="a" style="left:899.7px;top:140.8px;width:1px;height:32.3px;background:#d4d4d4;"></div>
<div class="a" style="left:973.95px;top:140.8px;width:1px;height:32.3px;background:#d4d4d4;"></div>
<div class="a" style="left:1040.2px;top:140.8px;width:1px;height:32.3px;background:#d4d4d4;"></div>
<div class="a" style="left:1079.1px;top:140.8px;width:1px;height:32.3px;background:#d4d4d4;"></div>
<div class="btn" style="left:1124.5px;top:140.3px;width:84.7px;height:33.3px;background:#fff;border-color:#d4d4d4;"></div>
<div class="btn" style="left:1209.9px;top:140.3px;width:39.1px;height:33.3px;background:#fff;border-color:#d4d4d4;"></div>
<div class="btn" style="left:1258.2px;top:140.3px;width:70.6px;height:33.3px;background:#fff;border-color:#d4d4d4;"></div>
<div class="btn" style="left:1334.2px;top:140.3px;width:86px;height:33.3px;background:#fff;border-color:#d4d4d4;"></div>
<svg style="left:717.2px;top:151.2px;" width="11.8" height="11.8" viewBox="0 0 11.8 11.8"><path d="M0 5.9H11.8M5.9 0V11.8" stroke="#333" stroke-width="1.4"/></svg>
<svg style="left:762px;top:150.5px;" width="12" height="13" viewBox="0 0 12 13"><path d="M6 13V1M.8 6.2L6 1L11.2 6.2" fill="none" stroke="#333" stroke-width="1.3"/></svg>
<svg style="left:801.5px;top:150.5px;" width="12" height="13" viewBox="0 0 12 13"><path d="M6 0V12M.8 6.8L6 12L11.2 6.8" fill="none" stroke="#333" stroke-width="1.3"/></svg>
<svg style="left:847.2px;top:152.5px;" width="9" height="9" viewBox="0 0 9 9"><path d="M.4 .3L6.6 4.5L.4 8.7Z" fill="#333"/><rect x="6.8" y=".3" width="1.7" height="8.4" fill="#333"/></svg>
<span class="t" style="left:863.2px;top:147.3px;font-size:14.2px;color:#333;">Run</span>
<div class="a" style="left:914.2px;top:151px;width:12.3px;height:12.3px;background:#333;border-radius:1px;"></div>
<span class="t" style="left:931.2px;top:147.3px;font-size:14.2px;color:#333;">Stop</span>
<svg style="left:986.2px;top:150px;" width="15" height="14" viewBox="0 0 15 14"><path d="M1 4.2H12M9.4 1.6L12 4.2L9.4 6.8M14 1.4V7M14 9.8H3M5.6 7.2L3 9.8L5.6 12.4M1 7V12.6" fill="none" stroke="#333" stroke-width="1.35"/></svg>
<span class="t" style="left:1005.2px;top:147.3px;font-size:14.2px;color:#333;">Tab</span>
<svg style="left:1052.7px;top:150px;" width="14" height="14" viewBox="0 0 14 14"><g transform="translate(14,0) scale(-1,1)"><path d="M3.2 11.8A5.6 5.6 0 1 1 10.8 11.8" fill="none" stroke="#333" stroke-width="1.35"/><path d="M1 9.4L3.3 12.4L6.2 10.6" fill="none" stroke="#333" stroke-width="1.2"/></g></svg>
<svg style="left:1093.2px;top:153px;" width="11" height="8" viewBox="0 0 11 8"><path d="M.3 .2L5.4 4L.3 7.8ZM5.4 .2L10.6 4L5.4 7.8Z" fill="#333"/></svg>
<span class="t" style="left:1140.7px;top:147.3px;font-size:14.2px;color:#333;">Code</span>
<svg style="left:1180px;top:152.7px;" width="13" height="9" viewBox="0 0 13 9"><path d="M.8 .8L6.2 7.4L11.6 .8" fill="none" stroke="#333" stroke-width="1.25"/></svg>
<svg style="left:1221.7px;top:152.5px;" width="15" height="9" viewBox="0 0 15 9"><rect x=".5" y=".5" width="14" height="8" rx="1" fill="none" stroke="#555" stroke-width=".9"/><path d="M2 2.6H13M2 4.4H13" stroke="#555" stroke-width=".9" stroke-dasharray="1.2 .8"/><path d="M4 6.6H11" stroke="#555" stroke-width=".9"/></svg>
<svg style="left:1271.7px;top:150px;" width="14" height="14" viewBox="0 0 14 14"><path d="M4 2.8A5.6 5.6 0 1 0 10 2.8M7 .4V7" fill="none" stroke="#333" stroke-width="1.2"/></svg>
<span class="t" style="left:1290px;top:147.3px;font-size:14.2px;color:#333;">Halt</span>
<span class="t" style="left:1347px;top:147.3px;font-size:14.2px;color:#333;">Validate</span>
<div class="a" style="left:5px;top:183px;width:693px;height:1px;background:#97cb92;"></div>
<div class="a" style="left:697px;top:183px;width:1px;height:487px;background:#97cb92;"></div>
<div class="a" style="left:5px;top:669px;width:693px;height:1px;background:#97cb92;"></div>
<div class="a" style="left:5px;top:183px;width:5px;height:487px;background:#74b06c;"></div>
<div class="a" style="left:156.4px;top:186px;width:535.2px;height:126px;border:1px solid #cfcfcf;background:#fff;border-radius:2px"></div>
<div class="code" style="left:67.1px;top:191.137px;font-size:20px;line-height:23.25px;color:#303f9f;">In [9]:</div>
<div class="code" style="left:161px;top:192.137px;font-size:20px;line-height:23.25px;"><span class="kw">using</span> Plots
<span class="cm"># Data to plot:</span>
x = <span class="nu">1</span>:<span class="nu">50</span>
y = rand<span class="mb">(</span><span class="nu">50</span><span class="mb">)</span>
plot(x, y)</div>
<div class="a" style="left:306.3px;top:263px;width:1px;height:21px;background:#333;"></div>
<div class="a" style="left:676px;top:187px;width:14.3px;height:13px;border:1px solid #d8d8d8;background:#fff;border-radius:0px"></div>
<span class="t" style="right:726.7px;top:183.5px;font-size:11px;color:#666;letter-spacing:.33px">4.795 seconds</span>
<span class="t" style="left:676px;top:183.5px;width:14.3px;text-align:center;font-size:11px;color:#666">1</span>
<div class="code" style="left:67.1px;top:318.237px;font-size:20px;line-height:23.25px;color:#d4502a;">Out[9]:</div>
<svg style="left:159px;top:315px;" width="535" height="352" viewBox="0 0 535 352"><path d="M45.60 7.40V326.70" stroke="#eeeeee" stroke-width="1"/><path d="M138.20 7.40V326.70" stroke="#eeeeee" stroke-width="1"/><path d="M230.80 7.40V326.70" stroke="#eeeeee" stroke-width="1"/><path d="M323.40 7.40V326.70" stroke="#eeeeee" stroke-width="1"/><path d="M416.00 7.40V326.70" stroke="#eeeeee" stroke-width="1"/><path d="M508.60 7.40V326.70" stroke="#eeeeee" stroke-width="1"/><path d="M41.50 319.60H522.30" stroke="#eeeeee" stroke-width="1"/><path d="M41.50 243.77H522.30" stroke="#eeeeee" stroke-width="1"/><path d="M41.50 167.95H522.30" stroke="#eeeeee" stroke-width="1"/><path d="M41.50 92.12H522.30" stroke="#eeeeee" stroke-width="1"/><path d="M41.50 16.30H522.30" stroke="#eeeeee" stroke-width="1"/><path d="M41.50 7.40V326.70H522.30" fill="none" stroke="#333" stroke-width="1"/><path d="M45.60 326.70v-4.2" stroke="#333" stroke-width="1"/><text x="45.60" y="340.60" text-anchor="middle" font-size="10" font-family="DejaVu Sans, sans-serif" fill="#222">0</text><path d="M138.20 326.70v-4.2" stroke="#333" stroke-width="1"/><text x="138.20" y="340.60" text-anchor="middle" font-size="10" font-family="DejaVu Sans, sans-serif" fill="#222">10</text><path d="M230.80 326.70v-4.2" stroke="#333" stroke-width="1"/><text x="230.80" y="340.60" text-anchor="middle" font-size="10" font-family="DejaVu Sans, sans-serif" fill="#222">20</text><path d="M323.40 326.70v-4.2" stroke="#333" stroke-width="1"/><text x="323.40" y="340.60" text-anchor="middle" font-size="10" font-family="DejaVu Sans, sans-serif" fill="#222">30</text><path d="M416.00 326.70v-4.2" stroke="#333" stroke-width="1"/><text x="416.00" y="340.60" text-anchor="middle" font-size="10" font-family="DejaVu Sans, sans-serif" fill="#222">40</text><path d="M508.60 326.70v-4.2" stroke="#333" stroke-width="1"/><text x="508.60" y="340.60" text-anchor="middle" font-size="10" font-family="DejaVu Sans, sans-serif" fill="#222">50</text><path d="M41.50 319.60h4.2" stroke="#333" stroke-width="1"/><text x="33.40" y="323.30" text-anchor="end" font-size="10" font-family="DejaVu Sans, sans-serif" fill="#222">0.00</text><path d="M41.50 243.77h4.2" stroke="#333" stroke-width="1"/><text x="33.40" y="247.47" text-anchor="end" font-size="10" font-family="DejaVu Sans, sans-serif" fill="#222">0.25</text><path d="M41.50 167.95h4.2" stroke="#333" stroke-width="1"/><text x="33.40" y="171.65" text-anchor="end" font-size="10" font-family="DejaVu Sans, sans-serif" fill="#222">0.50</text><path d="M41.50 92.12h4.2" stroke="#333" stroke-width="1"/><text x="33.40" y="95.83" text-anchor="end" font-size="10" font-family="DejaVu Sans, sans-serif" fill="#222">0.75</text><path d="M41.50 16.30h4.2" stroke="#333" stroke-width="1"/><text x="33.40" y="20.00" text-anchor="end" font-size="10" font-family="DejaVu Sans, sans-serif" fill="#222">1.00</text><polyline points="54.86,208.59 64.12,25.40 73.38,210.11 82.64,16.72 91.90,238.92 101.16,89.09 110.42,109.41 119.68,192.21 128.94,274.41 138.20,259.55 147.46,185.84 156.72,63.31 165.98,169.16 175.24,185.39 184.50,30.56 193.76,317.17 203.02,29.95 212.28,62.10 221.54,185.84 230.80,207.99 240.06,302.62 249.32,266.83 258.58,166.13 267.84,21.46 277.10,196.76 286.36,206.29 295.62,201.62 304.88,21.15 314.14,60.89 323.40,201.92 332.66,141.87 341.92,317.78 351.18,169.77 360.44,251.18 369.70,316.99 378.96,235.07 388.22,258.15 397.48,35.41 406.74,63.31 416.00,228.91 425.26,92.12 434.52,300.80 443.78,194.64 453.04,238.92 462.30,194.03 471.56,96.98 480.82,149.75 490.08,100.92 499.34,127.00 508.60,96.49" fill="none" stroke="#4b9ff0" stroke-width="1" stroke-linejoin="round"/><rect x="441.50" y="17.50" width="65" height="23.5" fill="#fff" stroke="#111" stroke-width="1"/><path d="M447.50 29.50H477.50" stroke="#4b9ff0" stroke-width="1"/><text x="484.00" y="33.00" font-size="10" font-family="DejaVu Sans, sans-serif" fill="#222">y1</text></svg>
<div class="a" style="left:156.4px;top:679.2px;width:535.2px;height:32.6px;border:1px solid #cfcfcf;background:#fff;border-radius:2px"></div>
<div class="code" style="left:67.1px;top:684.637px;font-size:20px;line-height:23.25px;color:#303f9f;">In [4]:</div>
<div class="code" style="left:161px;top:685.437px;font-size:20px;line-height:23.25px;"><span class="kw">import</span> Pkg; Pkg.add<span class="mb">(</span><span class="st">"Nemo"</span><span class="mb">)</span></div>
<div class="a" style="left:676px;top:680px;width:14.3px;height:13px;border:1px solid #d8d8d8;background:#fff;border-radius:0px"></div>
<span class="t" style="right:726.7px;top:676.5px;font-size:11px;color:#666;letter-spacing:.33px">43.274 seconds</span>
<span class="t" style="left:676px;top:676.5px;width:14.3px;text-align:center;font-size:11px;color:#666">2</span>
<div class="a" style="left:15.2px;top:713px;width:142.9px;height:107px;border:1px solid #ddd;background:#fff;border-radius:2px"></div>
<div class="a" style="left:158.5px;top:713px;width:533.5px;height:100px;background:#fadcdd;"></div>
<div class="code" style="left:67.1px;top:718.537px;font-size:20px;line-height:23.25px;color:#d4502a;">Out[4]:</div>
<div class="out" style="left:159.6px;top:717.277px;font-size:20px;line-height:24.2px;">   <span class="g">Resolving</span> package versions...
   <span class="g">Installed</span> Antic_jll ─────── v0.200.500+0
   <span class="g">Installed</span> Arb_jll ─────────
v200.2000.0+0</div>
<div class="a" style="left:0;top:37px;width:46px;height:765px;background:linear-gradient(90deg,rgba(0,0,0,.105),rgba(0,0,0,.04) 38%,rgba(0,0,0,0));pointer-events:none"></div>
<div class="a" style="left:707px;top:182px;width:692px;height:1px;background:#c6c6c6;"></div>
<div class="a" style="left:707px;top:539px;width:692px;height:1px;background:#cfcfcf;"></div>
<div class="a" style="left:707px;top:182px;width:5px;height:358px;background:#5e9fe9;"></div>
<div class="a" style="left:851.6px;top:185.2px;width:540.8px;height:31.4px;border:1px solid #cfcfcf;background:#fff;border-radius:2px"></div>
<div class="code" style="left:766px;top:189.129px;font-size:19px;line-height:22.2px;letter-spacing:.035px;-webkit-text-stroke:.18px currentColor;color:#303f9f;">In [4]:</div>
<div class="code" style="left:855.6px;top:190.629px;font-size:19px;line-height:22.2px;letter-spacing:.035px;-webkit-text-stroke:.18px currentColor;"><span class="kw">import</span> Pkg; Pkg.add(<span class="st">"Nemo"</span>)</div>
<div class="a" style="left:1378px;top:186px;width:14.3px;height:13px;border:1px solid #d8d8d8;background:#fff;border-radius:0px"></div>
<span class="t" style="right:24.7px;top:182.5px;font-size:11px;color:#666;letter-spacing:.33px">43.274 seconds</span>
<span class="t" style="left:1378px;top:182.5px;width:14.3px;text-align:center;font-size:11px;color:#666">2</span>
<div class="a" style="left:717.1px;top:217.6px;width:135.9px;height:319px;border:1px solid #ddd;background:#fff;border-radius:2px"></div>
<div class="a" style="left:852.8px;top:217.5px;width:539.7px;height:319px;background:#fadcdd;overflow:hidden">
</div>
<div class="code" style="left:766px;top:222.329px;font-size:19px;line-height:22.2px;letter-spacing:.035px;-webkit-text-stroke:.18px currentColor;color:#d4502a;">Out[4]:</div>
<div class="a" style="left:852.8px;top:217.5px;width:545px;height:319px;overflow:hidden">
<div class="out" style="left:1.2px;top:5.58315px;font-size:19px;line-height:23.08px;letter-spacing:.03px;">   <span class="g">Resolving</span> package versions...
   <span class="g">Installed</span> Antic_jll ─────── v0.200.500+0
   <span class="g">Installed</span> Arb_jll ───────── v200.2000.0+0
   <span class="g">Installed</span> FLINT_jll ─────── v200.800.0+1
   <span class="g">Installed</span> Calcium_jll ───── v0.400.100+0
   <span class="g">Installed</span> LoadFlint ─────── v0.6.1
   <span class="g">Installed</span> AbstractAlgebra ─ v0.21.0
   <span class="g">Installed</span> Nemo ──────────── v0.26.1
    <span class="g">Updating</span>
`~/.julia/environment/v1.6/Project.toml`
  <span class="gr">[2edaba10]</span> <span class="lg">+ Nemo v0.26.1</span>
    <span class="g">Updating</span>
`~/.julia/environment/v1.6/Manifest.toml`
  <span class="gr">[c3fe647b]</span> <span class="lg">+ AbstractAlgebra v0.21.0</span></div>
</div>
<div class="a" style="left:851.4px;top:549.5px;width:541px;height:164.1px;border:1px solid #cfcfcf;background:#fff;border-radius:2px"></div>
<div class="code" style="left:766px;top:554.029px;font-size:19px;line-height:22.2px;letter-spacing:.035px;-webkit-text-stroke:.18px currentColor;color:#303f9f;">In [8]:</div>
<div class="code" style="left:855.6px;top:555.229px;font-size:19px;line-height:22.2px;letter-spacing:.035px;-webkit-text-stroke:.18px currentColor;"><span class="kw">using</span> Nemo;
R, x = PolynomialRing(ZZ, <span class="st">"x"</span>)
S, y = PolynomialRing(R, <span class="st">"y"</span>)
T, z = PolynomialRing(S, <span class="st">"z"</span>)
f = x + y + z + <span class="nu">1</span>;
p = f^<span class="nu">30</span>;
<span class="me">@time</span> q = p*(p+<span class="nu">1</span>);</div>
<div class="a" style="left:1378px;top:550px;width:14.3px;height:13px;border:1px solid #d8d8d8;background:#fff;border-radius:0px"></div>
<span class="t" style="right:24.7px;top:546.5px;font-size:11px;color:#666;letter-spacing:.33px">2.808 seconds</span>
<span class="t" style="left:1378px;top:546.5px;width:14.3px;text-align:center;font-size:11px;color:#666">3</span>
<div class="code" style="left:766px;top:719.929px;font-size:19px;line-height:22.2px;letter-spacing:.035px;-webkit-text-stroke:.18px currentColor;color:#d4502a;">Out[8]:</div>
<div class="code" style="left:853.5px;top:720.279px;font-size:19px;line-height:22.3px;letter-spacing:.035px;-webkit-text-stroke:.18px currentColor;color:#222;-webkit-text-stroke:.12px #222;">  0.541295 seconds (755.09 k allocations:
23.053 MiB, 4.78% gc time, 1.21% compilation
time)</div>
<div class="a" style="left:717.6px;top:791.5px;width:135px;height:1px;background:#f1f1f1;"></div>
</div></body></html>
